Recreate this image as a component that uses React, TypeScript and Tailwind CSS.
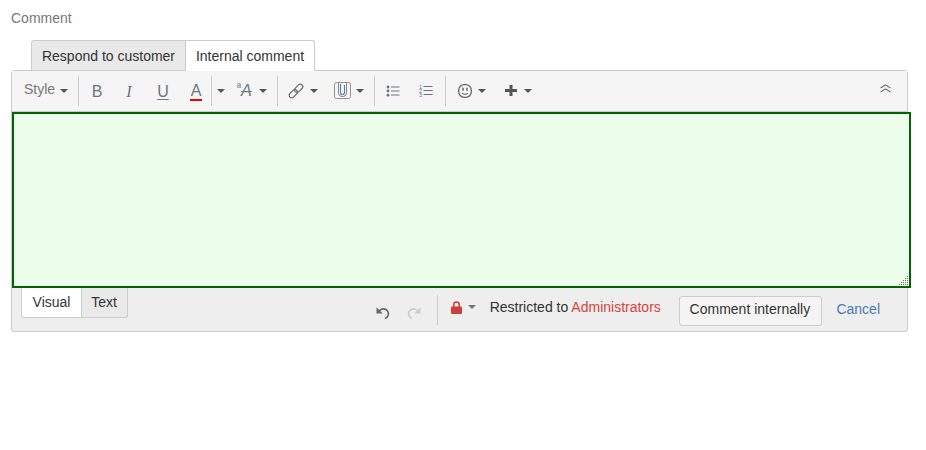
function Caret({ className = '' }: { className?: string }) {
  return <span className={`w-0 h-0 shrink-0 border-x-[4px] border-x-transparent border-t-[4px] border-t-[#555] ${className}`} />;
}

function Sep() {
  return <span className="w-px h-[30px] bg-[#ccc] shrink-0" />;
}

function LinkIcon() {
  return (
    <svg width="16" height="16" viewBox="0 0 16 16" fill="none" stroke="#6a6a6a" strokeWidth="1.2">
      <rect x="0.55" y="8.2" width="9.5" height="5" rx="2.5" transform="rotate(-45 5.3 10.7)" />
      <rect x="5.95" y="2.8" width="9.5" height="5" rx="2.5" transform="rotate(-45 10.7 5.3)" />
    </svg>
  );
}

function ClipIcon() {
  return (
    <svg width="17" height="17" viewBox="0 0 17 17" fill="none">
      <rect x="0.5" y="0.5" width="16" height="16" rx="2" stroke="#a08f84" />
      <path d="M4.5 1v9.5a4 4 0 0 0 8 0V1" stroke="#7d93a3" strokeWidth="1.1" />
      <path d="M6.5 2v8.5a2 2 0 0 0 4 0V3" stroke="#5d7f99" strokeWidth="1.1" />
    </svg>
  );
}

function BulletIcon() {
  return (
    <svg width="14" height="12" viewBox="0 0 14 12" fill="#6a7480">
      <circle cx="2" cy="2" r="1.4" />
      <circle cx="2" cy="6" r="1.4" />
      <circle cx="2" cy="10.2" r="1.4" />
      <rect x="5" y="1.5" width="8.5" height="1" />
      <rect x="5" y="5.5" width="8.5" height="1" />
      <rect x="5" y="9.5" width="8.5" height="1" />
    </svg>
  );
}

function NumberIcon() {
  return (
    <svg width="14" height="13" viewBox="0 0 14 13" fill="#6a7480" fontSize="5.5" fontFamily="Liberation Sans">
      <text x="0" y="4.5">1</text>
      <text x="0" y="8.8">2</text>
      <text x="0" y="13">3</text>
      <rect x="4.5" y="2" width="9" height="1" />
      <rect x="4.5" y="6" width="9" height="1" />
      <rect x="4.5" y="10" width="9" height="1" />
    </svg>
  );
}

function SmileIcon() {
  return (
    <svg width="14" height="14" viewBox="0 0 14 14" fill="none" stroke="#666">
      <rect x="0.7" y="0.7" width="12.6" height="12.6" rx="5.5" strokeWidth="1.3" />
      <path d="M5 3.8v3M9 3.8v3" strokeWidth="1.5" />
      <path d="M4 9.2c1.5 1.4 4.5 1.4 6 0" strokeWidth="1.1" />
    </svg>
  );
}

function PlusIcon() {
  return (
    <svg width="12" height="11" viewBox="0 0 12 11" fill="#555">
      <rect x="0" y="4" width="12" height="3" />
      <rect x="4.5" y="0" width="3" height="11" />
    </svg>
  );
}

function UndoIcon({ color, flip = false }: { color: string; flip?: boolean }) {
  return (
    <svg width="15" height="14" viewBox="0 0 15 14" fill="none" className={flip ? '-scale-x-100' : ''}>
      <path d="M3.2 5.2A5 5 0 1 1 9 12.6" stroke={color} strokeWidth="1.6" />
      <path d="M0.5 1.2V7.5H6.8Z" fill={color} />
    </svg>
  );
}

function LockIcon() {
  return (
    <svg width="11" height="13" viewBox="0 0 11 13" fill="none">
      <path d="M2.8 6V3.7a2.7 2.7 0 0 1 5.4 0V6" stroke="#c9413a" strokeWidth="1.5" />
      <rect x="0" y="5.5" width="11" height="7.5" rx="1" fill="#c9413a" />
    </svg>
  );
}

function CollapseIcon() {
  return (
    <svg width="11" height="9" viewBox="0 0 11 9" fill="none" stroke="#777" strokeWidth="1.1">
      <path d="M0.5 4L5.5 1L10.5 4" />
      <path d="M0.5 8L5.5 5L10.5 8" />
    </svg>
  );
}

function Resizer() {
  const dots: [number, number][] = [];
  for (let y = 0; y < 5; y++) {
    for (let x = 4 - y; x < 5; x++) dots.push([x * 2, y * 2]);
  }
  return (
    <svg className="absolute right-0 bottom-0" width="10" height="10" viewBox="0 0 10 10" fill="#5f755f">
      {dots.map(([x, y]) => (
        <rect key={`${x}-${y}`} x={x} y={y} width="1" height="1" />
      ))}
    </svg>
  );
}

export default function App() {
  return (
    <div className="w-[926px] h-[450px] bg-white overflow-hidden pl-[11px] font-['Liberation_Sans',Arial,sans-serif] text-sm text-[#333]">
      <div className="pt-[10px] h-[40px] leading-[16px] text-[#777]">Comment</div>

      {/* Tabs */}
      <div className="flex pl-[20px] h-[31px] -mb-px relative z-10">
        <div className="w-[155px] h-[30px] bg-[#e9e9e9] border border-[#ccc] border-b-0 rounded-tl-[3px] flex items-center justify-center">
          Respond to customer
        </div>
        <div className="w-[129px] h-[31px] bg-white border border-l-0 border-[#ccc] border-b-0 rounded-tr-[3px] flex items-center justify-center pb-px">
          Internal comment
        </div>
      </div>

      <div className="w-[897px] h-[262px] border border-[#ccc] rounded-[3px] bg-[#eee] flex flex-col">
        {/* Toolbar */}
        <div className="h-[41px] pb-px border-b border-[#ccc] bg-[#f5f5f5] flex items-center text-[#6a7681] shrink-0">
          <div className="w-[66px] flex items-center pl-[12px] text-[#777] -mt-[4px]">
            <span>Style</span>
            <Caret className="ml-[5px] mt-[4px]" />
          </div>
          <Sep />
          <div className="w-[36px] text-center text-base pt-[2px]">B</div>
          <div className="w-[28px] text-center text-base italic font-['Liberation_Serif',serif] pt-[2px]">I</div>
          <div className="w-[40px] text-center text-base underline underline-offset-2 pt-[2px]">U</div>
          <div className="w-[26px] mr-[2px] flex justify-center pt-[2px]">
            <span className="text-base leading-[17px] border-b-2 border-[#f00000] px-px">A</span>
          </div>
          <Sep />
          <div className="w-[18px] flex justify-center"><Caret className="border-t-[#444]" /></div>
          <div className="w-[47px] flex items-center pl-[7px]">
            <span className="text-[11px] leading-none -mt-[7px]">ª</span>
            <span className="text-base italic line-through">A</span>
            <Caret className="ml-[7px]" />
          </div>
          <Sep />
          <div className="w-[50px] flex items-center pl-[10px]">
            <LinkIcon />
            <Caret className="ml-[6px]" />
          </div>
          <div className="w-[46px] flex items-center pl-[6px]">
            <ClipIcon />
            <Caret className="ml-[5px]" />
          </div>
          <Sep />
          <div className="w-[36px] flex justify-center"><BulletIcon /></div>
          <div className="w-[30px] mr-[4px] flex justify-center"><NumberIcon /></div>
          <Sep />
          <div className="w-[48px] flex items-center pl-[12px]">
            <SmileIcon />
            <Caret className="ml-[6px]" />
          </div>
          <div className="flex items-center pl-[11px]">
            <PlusIcon />
            <Caret className="ml-[7px]" />
          </div>
          <div className="ml-auto mr-[16px] -mt-[4px] flex"><CollapseIcon /></div>
        </div>

        {/* Editor area */}
        <div className="relative h-[176px] w-[899px] shrink-0 border-2 border-[#006400] bg-[#edfeec]">
          <Resizer />
        </div>

        {/* Bottom bar */}
        <div className="flex-1 flex items-start">
          <div className="flex ml-[9px] h-[30px]">
            <div className="w-[60px] bg-white border border-t-0 border-r-0 border-[#ccc] rounded-bl-[3px] flex items-center justify-center pb-[2px]">Visual</div>
            <div className="w-[47px] bg-[#e9e9e9] border border-t-0 border-[#ccc] rounded-br-[3px] flex items-center justify-center pr-px pb-[2px]">Text</div>
          </div>
          <div className="ml-auto flex items-center h-[42px] pt-[3px]">
            <span className="mt-[4px] flex"><UndoIcon color="#666" /></span>
            <span className="ml-[15px] mt-[4px] flex"><UndoIcon color="#ccc" flip /></span>
            <span className="w-px h-[30px] bg-[#ccc] ml-[16px] -mt-[2px]" />
            <span className="ml-[13px] -mt-[7px] flex"><LockIcon /></span>
            <Caret className="ml-[6px] -mt-[8px] border-t-[#777]" />
            <span className="ml-[14px] -mt-[8px]">Restricted to <span className="text-[#d8423a]">Administrators</span></span>
            <button className="ml-[18.6px] h-[30px] w-[143px] bg-[#f4f4f4] border border-[#ccc] rounded-[3px] text-[#333] pb-[3px] pr-[2px]">Comment internally</button>
            <span className="ml-[14px] mr-[27px] -mt-[3px] text-[#4a78b5]">Cancel</span>
          </div>
        </div>
      </div>
    </div>
  );
}
